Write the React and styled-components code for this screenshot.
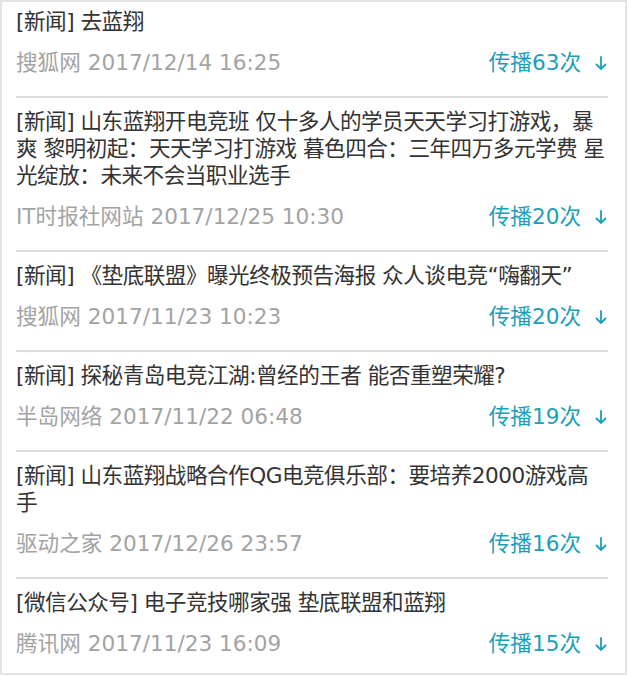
import React from 'react';
import styled, {createGlobalStyle} from 'styled-components';

const GlobalStyle = createGlobalStyle`
  html, body {
    margin: 0;
    padding: 0;
    background: #fff;
  }
  body {
    font-family: "DejaVu Sans", "Noto Sans CJK SC", sans-serif;
  }
`;

const news = [
  {tag: '新闻', title: '去蓝翔', source: '搜狐网', time: '2017/12/14 16:25', count: 63},
  {
    tag: '新闻',
    title:
      '山东蓝翔开电竞班 仅十多人的学员天天学习打游戏，暴爽 黎明初起：天天学习打游戏 暮色四合：三年四万多元学费 星光绽放：未来不会当职业选手',
    source: 'IT时报社网站',
    time: '2017/12/25 10:30',
    count: 20
  },
  {tag: '新闻', title: '《垫底联盟》曝光终极预告海报 众人谈电竞“嗨翻天”', source: '搜狐网', time: '2017/11/23 10:23', count: 20},
  {tag: '新闻', title: '探秘青岛电竞江湖:曾经的王者 能否重塑荣耀?', source: '半岛网络', time: '2017/11/22 06:48', count: 19},
  {tag: '新闻', title: '山东蓝翔战略合作QG电竞俱乐部：要培养2000游戏高手', source: '驱动之家', time: '2017/12/26 23:57', count: 16},
  {tag: '微信公众号', title: '电子竞技哪家强 垫底联盟和蓝翔', source: '腾讯网', time: '2017/11/23 16:09', count: 15}
];

const Card = styled.section`
  box-sizing: border-box;
  width: 627px;
  height: 675px;
  border: 2px solid #e3e3e3;
  padding: 0 17px 0 14px;
  overflow: hidden;
`;

const Item = styled.article`
  padding: 10px 0 20px;
  border-bottom: 2px solid #dcdcdc;

  &:first-child {
    padding-top: 6px;
  }
  &:last-child {
    border-bottom: none;
  }
`;

const Title = styled.h3`
  margin: 0;
  font-size: 21.6px;
  font-weight: normal;
  line-height: 27px;
  letter-spacing: -0.5px;
  color: #333;
`;

const Meta = styled.div`
  display: flex;
  align-items: center;
  justify-content: space-between;
  margin-top: 14px;
  line-height: 27px;
  font-size: 21.6px;
`;

const Source = styled.span`
  color: #a3a3a3;
`;

const Spread = styled.span`
  color: #1b9fb8;
  display: flex;
  align-items: center;
  gap: 14px;
`;

const Arrow = styled.svg`
  width: 12px;
  height: 16px;
  margin-right: 1px;
`;

function DownArrow() {
  return (
    <Arrow viewBox="0 0 12 16" fill="none" stroke="currentColor" strokeWidth="1.8" strokeLinecap="round">
      <path d="M6 2v12M1.5 9.5L6 14l4.5-4.5" />
    </Arrow>
  );
}

export default function App() {
  return (
    <>
      <GlobalStyle />
      <Card>
        {news.map((n, i) => (
          <Item key={i}>
            <Title>
              [{n.tag}] {n.title}
            </Title>
            <Meta>
              <Source>
                {n.source} {n.time}
              </Source>
              <Spread>
                传播{n.count}次
                <DownArrow />
              </Spread>
            </Meta>
          </Item>
        ))}
      </Card>
    </>
  );
}
